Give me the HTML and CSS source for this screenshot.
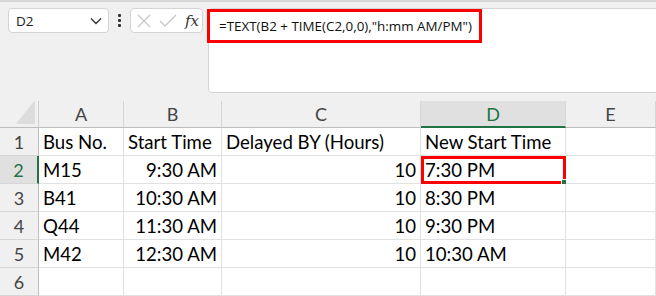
FILE: index.html
```html
<!DOCTYPE html>
<html lang="en">
<head>
  <meta charset="UTF-8" />
  <title>Bus Schedule</title>
  <link rel="stylesheet" href="styles.css">
</head>
<body>

<div class="toolbar">
  <div class="name-box">
    <span>D2</span>
    <svg class="chevron" width="12" height="8" viewBox="0 0 12 8"><path d="M1 1.5 L6 6.5 L11 1.5" fill="none" stroke="#333" stroke-width="1.4"/></svg>
  </div>
  <div class="dots"><i></i><i></i><i></i></div>
  <div class="fx-box">
    <svg width="16" height="16" viewBox="0 0 16 16"><path d="M2 2 L14 14 M14 2 L2 14" stroke="#c8c8c8" stroke-width="1.3" fill="none"/></svg>
    <svg width="18" height="16" viewBox="0 0 18 16"><path d="M1 8 L6 13 L17 2" stroke="#c8c8c8" stroke-width="1.3" fill="none"/></svg>
    <span class="fx">fx</span>
  </div>
  <div class="formula-box">
    <span class="formula">=TEXT(B2 + TIME(C2,0,0),"h:mm AM/PM")</span>
  </div>
</div>

<div class="sheet">
  <div class="hd corner"><span class="tri"></span></div>
  <div class="hd col">A</div>
  <div class="hd col">B</div>
  <div class="hd col">C</div>
  <div class="hd col active-col">D</div>
  <div class="hd col">E</div>

  <div class="hd row">1</div>
  <div class="cell">Bus No.</div>
  <div class="cell">Start Time</div>
  <div class="cell">Delayed BY (Hours)</div>
  <div class="cell">New Start Time</div>
  <div class="cell"></div>

  <div class="hd row active-row">2</div>
  <div class="cell">M15</div>
  <div class="cell num">9:30 AM</div>
  <div class="cell num">10</div>
  <div class="cell selected">7:30 PM<span class="handle"></span></div>
  <div class="cell"></div>

  <div class="hd row">3</div>
  <div class="cell">B41</div>
  <div class="cell num">10:30 AM</div>
  <div class="cell num">10</div>
  <div class="cell">8:30 PM</div>
  <div class="cell"></div>

  <div class="hd row">4</div>
  <div class="cell">Q44</div>
  <div class="cell num">11:30 AM</div>
  <div class="cell num">10</div>
  <div class="cell">9:30 PM</div>
  <div class="cell"></div>

  <div class="hd row">5</div>
  <div class="cell">M42</div>
  <div class="cell num">12:30 AM</div>
  <div class="cell num">10</div>
  <div class="cell">10:30 AM</div>
  <div class="cell"></div>

  <div class="hd row">6</div>
  <div class="cell"></div>
  <div class="cell"></div>
  <div class="cell"></div>
  <div class="cell"></div>
  <div class="cell"></div>
</div>

</body>
</html>
```

FILE: styles.css
```css
html, body { margin: 0; padding: 0; }
body {
  width: 656px; height: 296px; overflow: hidden;
  background: #f0f0f0;
  font-family: "Open Sans", "Noto Sans", sans-serif;
}

.toolbar {
  height: 101px; box-sizing: border-box;
  border-top: 2px solid #d6d6d6;
  padding: 6px 0 0 8px;
  display: flex; align-items: flex-start;
}
.toolbar > * { flex-shrink: 0; }
.name-box {
  width: 101px; height: 25px; box-sizing: border-box;
  background: #fff; border: 1px solid #d4d4d4; border-radius: 4px;
  display: flex; align-items: center; justify-content: space-between;
  padding: 0 6px 0 7px;
  font-size: 13.5px; color: #222;
}
.dots {
  width: 21px; height: 25px;
  display: flex; flex-direction: column; align-items: center; justify-content: center; gap: 2px;
}
.dots i { width: 3px; height: 3px; background: #333; border-radius: 1px; }
.fx-box {
  width: 73px; height: 25px; box-sizing: border-box;
  background: #fff; border: 1px solid #d4d4d4; border-radius: 4px;
  display: flex; align-items: center; gap: 7px; padding-left: 5px;
}
.fx {
  font-family: "DejaVu Serif", "Liberation Serif", serif; font-style: italic;
  font-size: 15px; color: #333; margin-left: 1px;
}
.formula-box {
  margin-left: 5px;
  width: 460px; height: 85px; box-sizing: border-box;
  background: #fff; border: 1px solid #d4d4d4; border-radius: 4px 0 0 4px;
}
.formula {
  display: inline-block; box-sizing: border-box;
  margin: 0 0 0 -2px;
  width: 275px; height: 34px;
  border: 3px solid #ff0000;
  padding: 5px 0 0 9px;
  font-size: 13.4px; color: #111; white-space: nowrap;
}

.sheet {
  display: grid;
  grid-template-columns: 39px 85px 98px 199px 145px 90px;
  grid-template-rows: 27px repeat(6, 28px);
  font-family: "Lato", "Open Sans", sans-serif;
  font-size: 18.6px;
}
.hd {
  box-sizing: border-box;
  background: #f0f0f0; color: #444;
  display: flex; align-items: center; justify-content: center;
  font-size: 18px;
}
.corner { position: relative; border-right: 1px solid #cfcfcf; border-bottom: 1px solid #bdbdbd; }
.tri {
  position: absolute; right: 3px; bottom: 3px;
  width: 0; height: 0;
  border-left: 19px solid transparent;
  border-bottom: 24px solid #dcdcdc;
}
.col { border-right: 1px solid #d6d6d6; border-bottom: 1px solid #bdbdbd; }
.active-col { background: #e0e0e0; color: #217346; border-bottom: 2px solid #217346; }
.row { border-right: 1px solid #bdbdbd; border-bottom: 1px solid #d6d6d6; }
.active-row { background: #e0e0e0; color: #217346; border-right: 2px solid #217346; }

.cell {
  box-sizing: border-box; position: relative;
  background: #fff; color: #000;
  border-right: 1px solid #e1e1e1; border-bottom: 1px solid #e1e1e1;
  padding: 0 4px;
  display: flex; align-items: center;
  white-space: nowrap;
}
.num { justify-content: flex-end; }
.selected { outline: 3px solid #ff0000; outline-offset: -3px; }
.handle {
  position: absolute; right: -3px; bottom: -3px;
  width: 5px; height: 5px; background: #217346;
  border: 1px solid #fff;
}
```
